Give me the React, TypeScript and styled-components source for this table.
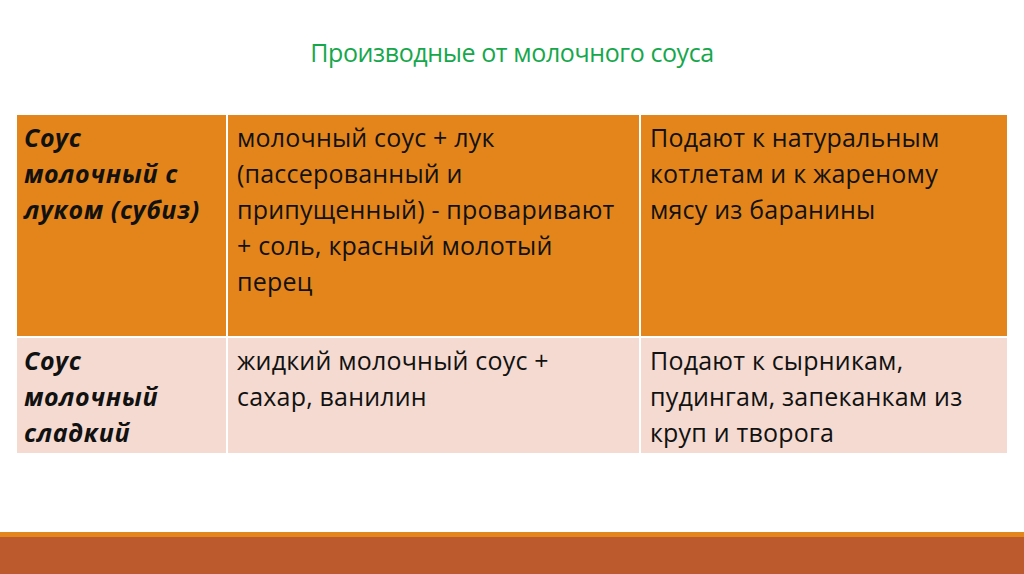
import React from 'react';
import styled, { createGlobalStyle } from 'styled-components';

const GlobalStyle = createGlobalStyle`
  html, body {
    margin: 0;
    padding: 0;
    background: #ffffff;
  }
  body {
    font-family: 'Open Sans', 'Noto Sans', sans-serif;
  }
`;

const Slide = styled.div`
  width: 1024px;
  height: 574px;
  display: flex;
  flex-direction: column;
  overflow: hidden;
`;

const Title = styled.h1`
  margin: 0;
  padding-top: 35px;
  height: 115px;
  box-sizing: border-box;
  text-align: center;
  font-family: 'Open Sans', 'Noto Sans', sans-serif;
  font-weight: 400;
  font-size: 25px;
  line-height: 34px;
  letter-spacing: -0.4px;
  color: #16a74c;
`;

const Table = styled.div`
  margin-left: 17px;
  width: 990px;
  display: grid;
  grid-template-columns: 209px 411px 366px;
  grid-template-rows: 221px 115px;
  gap: 2px;
  background: #ffffff;
`;

const Cell = styled.div<{ $tone: 'dark' | 'light'; $head?: boolean }>`
  background: ${(p) => (p.$tone === 'dark' ? '#e4851b' : '#f4dad0')};
  padding: 4px 6px 0 ${(p) => (p.$head ? '7px' : '9px')};
  font-size: 25px;
  line-height: 36px;
  color: #111111;
  font-weight: ${(p) => (p.$head ? 700 : 400)};
  font-style: ${(p) => (p.$head ? 'italic' : 'normal')};
  letter-spacing: ${(p) => (p.$head ? '0.6px' : '0.2px')};
  white-space: pre;
`;

const Filler = styled.div`
  flex: 1;
`;

const Footer = styled.div`
  height: 42px;
  border-top: 5px solid #e3861b;
  background: #bd5a2d;
  box-sizing: border-box;
`;

const rows = [
  {
    tone: 'dark' as const,
    name: 'Соус\nмолочный с\nлуком (субиз)',
    recipe: 'молочный соус + лук\n(пассерованный и\nприпущенный) - проваривают\n+ соль, красный молотый\nперец',
    serve: 'Подают к натуральным\nкотлетам и к жареному\nмясу из баранины',
  },
  {
    tone: 'light' as const,
    name: 'Соус\nмолочный\nсладкий',
    recipe: 'жидкий молочный соус +\nсахар, ванилин',
    serve: 'Подают к сырникам,\nпудингам, запеканкам из\nкруп и творога',
  },
];

const App = () => {
  return (
    <Slide>
      <GlobalStyle />
      <Title>Производные от молочного соуса</Title>
      <Table>
        {rows.map((row) => (
          <React.Fragment key={row.name}>
            <Cell $tone={row.tone} $head>
              {row.name}
            </Cell>
            <Cell $tone={row.tone}>{row.recipe}</Cell>
            <Cell $tone={row.tone}>{row.serve}</Cell>
          </React.Fragment>
        ))}
      </Table>
      <Filler />
      <Footer />
    </Slide>
  );
};

export default App;
